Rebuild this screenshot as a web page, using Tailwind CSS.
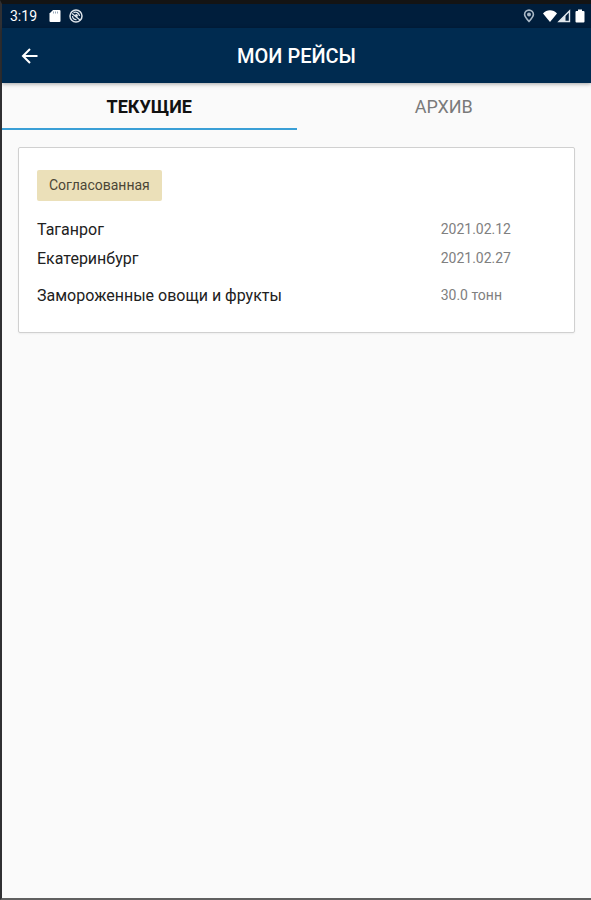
<!DOCTYPE html>
<html lang="ru">
<head>
    <meta charset="UTF-8">
    <meta name="viewport" content="width=device-width, initial-scale=1.0">
    <title>Мои рейсы</title>
    <script src="https://cdn.jsdelivr.net/npm/@tailwindcss/browser@4"></script>
</head>
<body class="bg-[#fafafa] font-[Roboto,sans-serif] text-[#212121]">
    <div class="min-h-screen flex flex-col border-t-4 border-t-[#141414] border-l-2 border-l-[#303033] border-b-2 border-b-[#606060]">

        <!-- Status bar -->
        <div class="h-6 bg-[#001e3c] text-white flex items-center justify-between pl-2 pr-1.5">
            <div class="flex items-center gap-3">
                <span class="text-sm">3:19</span>
                <svg class="w-3 h-3" viewBox="0 0 12 12" fill="#fff">
                    <path d="M4 0h6.5a1 1 0 0 1 1 1v10a1 1 0 0 1-1 1h-9a1 1 0 0 1-1-1V3.5z"/>
                    <path d="M4.5 1.500v2M6.500 1.500v2M8.500 1.500v2" stroke="#7f93a8" stroke-width=".8"/>
                </svg>
                <svg class="w-3.5 h-3.5 -ml-1" viewBox="0 0 14 14" fill="none" stroke="#dde4ea">
                    <circle cx="7" cy="7" r="6" stroke-width="1.5"/>
                    <path d="M3 4.5l8 6.5M4.5 3.6c2.5-1.2 5.6 0 6 3.4M3.5 7c0 2.4 1.8 3.8 4 3.6" stroke-width="1.3"/>
                    <circle cx="7.4" cy="6.4" r="1.5" fill="#dde4ea" stroke="none"/>
                </svg>
            </div>
            <div class="flex items-center">
                <svg class="w-3 h-3.5 mr-2" viewBox="0 0 12 14" fill="none" stroke="#a9b8c6">
                    <path d="M6 12.4C3.6 9.8 1.6 7.6 1.6 5.5a4.400 4.400 0 0 1 8.800 0C10.400 7.600 8.400 9.800 6 12.400z" stroke-width="1.6"/>
                    <circle cx="6" cy="5.5" r="2" fill="#a9b8c6" stroke="none"/>
                </svg>
                <svg class="w-3.5 h-3.5" viewBox="0 0 14 14" fill="#fff">
                    <path d="M7 13L0 4.500C2 2.300 4.400 1.200 7 1.200s5 1.100 7 3.300z"/>
                </svg>
                <svg class="w-3.5 h-3.5" viewBox="0 0 14 14">
                    <path d="M2 12.500L12.500 2v10.500z" fill="none" stroke="#dfe6ec" stroke-width="1.400"/>
                    <path d="M2 12.500L8.500 6v6.500z" fill="#dfe6ec"/>
                </svg>
                <svg class="w-2.5 h-3.5 ml-1" viewBox="0 0 10 14" fill="#fff">
                    <path d="M3 .5h4V2h1.500a1 1 0 0 1 1 1v9.500a1 1 0 0 1-1 1h-7a1 1 0 0 1-1-1V3a1 1 0 0 1 1-1H3z"/>
                </svg>
            </div>
        </div>

        <!-- App bar -->
        <header class="relative z-10 h-[55px] bg-[#002b50] text-white grid grid-cols-[56px_1fr_56px] items-center shadow-[0_1px_4px_rgba(0,0,0,0.35)]">
            <button type="button" aria-label="Назад" class="h-full flex items-center pl-[18px]">
                <svg class="w-5 h-5" viewBox="0 0 20 20" fill="none" stroke="#fff" stroke-width="2">
                    <path d="M17.500 10H3.500M10 3L3 10l7 7"/>
                </svg>
            </button>
            <h1 class="text-xl font-medium text-center">МОИ РЕЙСЫ</h1>
        </header>

        <!-- Tabs -->
        <nav class="grid grid-cols-2 h-[47px] text-lg">
            <button type="button" class="border-b-2 border-[#3a9fd6] pt-0.5 font-bold text-[#111111]">ТЕКУЩИЕ</button>
            <button type="button" class="border-b-2 border-transparent pt-0.5 text-[#7a7a7a]">АРХИВ</button>
        </nav>

        <!-- Trip card -->
        <main class="px-4 py-[17px]">
            <article class="bg-white border border-[#d0d0d0] rounded-xs shadow-xs px-[18px] pt-[22px] pb-[22px]">
                <span class="inline-block bg-[#ebe0b9] text-[#4b4636] rounded-xs text-sm leading-[31px] px-3 mb-3.5 align-top">Согласованная</span>
                <div class="grid grid-cols-[7fr_2fr] leading-[29px]">
                    <span>Таганрог</span>
                    <span class="text-sm leading-[29px] text-[#808080]">2021.02.12</span>
                    <span>Екатеринбург</span>
                    <span class="text-sm leading-[29px] text-[#808080]">2021.02.27</span>
                    <span class="mt-2">Замороженные овощи и фрукты</span>
                    <span class="mt-2 text-sm leading-[29px] text-[#808080]">30.0 тонн</span>
                </div>
            </article>
        </main>
    </div>
</body>
</html>
